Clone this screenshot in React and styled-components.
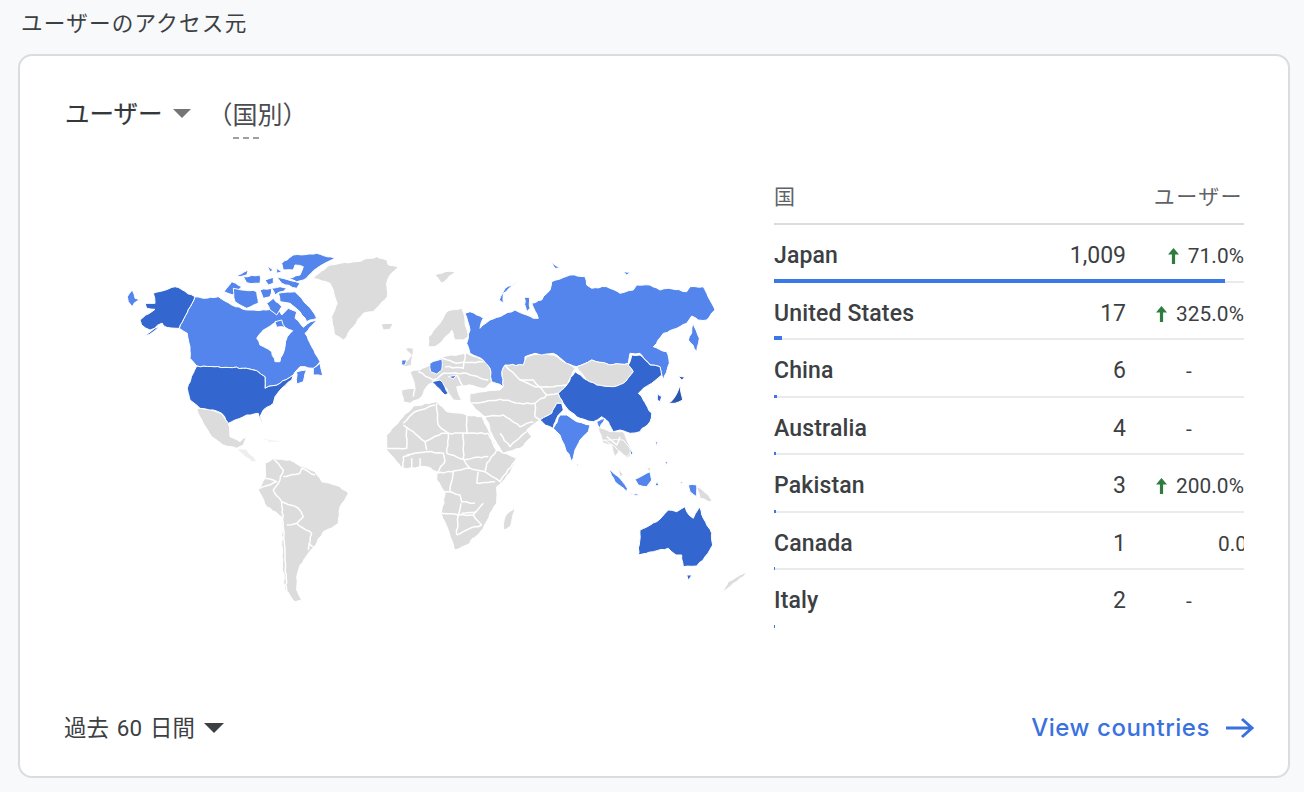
import React from "react";
import styled, { createGlobalStyle } from "styled-components";

const Global = createGlobalStyle`
  html, body { margin: 0; padding: 0; background: #f8f9fa; }
  body { font-family: Roboto, "Noto Sans CJK JP", sans-serif; color: #3c4043; }
`;

const Page = styled.div`
  width: 1304px;
  height: 792px;
  overflow: hidden;
  padding: 6px 14px 0 18px;
  box-sizing: border-box;
`;
const PageTitle = styled.h2`
  margin: 0 0 16px 3px;
  height: 32px;
  font: 400 21.6px/32px "Noto Sans CJK JP", sans-serif;
  letter-spacing: 1.2px;
  color: #3c4043;
`;
const Card = styled.section`
  box-sizing: border-box;
  width: 1272px;
  height: 724px;
  background: #fff;
  border: 2px solid #dadce0;
  border-radius: 14px;
  padding: 39px 33px 30px 44px;
  display: flex;
  flex-direction: column;
`;
const CardHeader = styled.div`
  display: flex;
  align-items: center;
  height: 36px;
  font: 400 24.5px/36px "Noto Sans CJK JP", sans-serif;
  color: #35383b;
`;
const MetricLabel = styled.span`
  margin-left: 1px;
  -webkit-text-stroke: 0.2px #35383b;
`;
const Caret = styled.span`
  display: inline-block;
  width: 0;
  height: 0;
  margin-left: ${(p) => p.$gap}px;
  border-left: ${(p) => p.$size}px solid transparent;
  border-right: ${(p) => p.$size}px solid transparent;
  border-top: ${(p) => p.$size}px solid ${(p) => p.$color};
`;
const Dimension = styled.span`
  position: relative;
  margin-left: 17px;
  font-size: 25px;
  color: #4a4d51;
  &::after {
    content: "";
    position: absolute;
    left: 25px;
    width: 26px;
    bottom: -8px;
    border-bottom: 2px dashed #9aa0a6;
  }
`;
const Body = styled.div`
  display: grid;
  grid-template-columns: 710px 470px;
  margin-top: 44px;
`;
const MapHolder = styled.div`
  padding: 65px 0 0 36px;
`;
const WorldMap = styled.svg`
  display: block;
  width: 660px;
  height: 380px;
  filter: blur(0.35px);
`;
const Table = styled.div`
  display: flex;
  flex-direction: column;
`;
const TableHead = styled.div`
  display: flex;
  justify-content: space-between;
  align-items: center;
  box-sizing: border-box;
  height: 50px;
  border-bottom: 2px solid #dadce0;
  padding: 0 1px 8px 0;
  font: 400 21px/30px "Noto Sans CJK JP", sans-serif;
  color: #5f6368;
`;
const HeadRight = styled.span`
  letter-spacing: 1.4px;
`;
const Row = styled.div`
  position: relative;
  box-sizing: border-box;
  height: 57.5px;
  display: flex;
  align-items: flex-start;
  padding-top: 14px;
  border-bottom: 2px solid ${(p) => (p.$last ? "transparent" : "#e8eaed")};
`;
const Name = styled.span`
  flex: 1;
  font: 500 23px/34px Roboto, sans-serif;
  letter-spacing: 0.15px;
  color: #3c4043;
`;
const Value = styled.span`
  font: 400 23px/34px Roboto, sans-serif;
  color: #3c4043;
  text-align: right;
`;
const Change = styled.span`
  box-sizing: border-box;
  width: 118px;
  overflow: hidden;
  white-space: nowrap;
  display: flex;
  align-items: center;
  justify-content: ${(p) => (p.$pad ? "flex-start" : "flex-end")};
  padding-left: ${(p) => p.$pad || 0}px;
  font: 400 20.8px/34px Roboto, sans-serif;
  color: #3c4043;
  letter-spacing: 0.1px;
`;
const UpArrow = styled.svg`
  width: 13px;
  height: 18px;
  margin-right: 8px;
  flex: none;
`;
const Bar = styled.div`
  position: absolute;
  left: 0;
  bottom: -2px;
  height: ${(p) => p.$h}px;
  background: #3b78e7;
`;
const Footer = styled.div`
  margin-top: auto;
  display: flex;
  align-items: center;
  justify-content: space-between;
  height: 36px;
`;
const Range = styled.span`
  display: flex;
  align-items: center;
  font: 400 22.4px/36px Roboto, "Noto Sans CJK JP", sans-serif;
  word-spacing: 2.5px;
  color: #3c4043;
`;
const LinkOut = styled.a`
  display: flex;
  align-items: center;
  font: 500 24px/36px Inter, sans-serif;
  letter-spacing: 0.55px;
  color: #3a71df;
`;
const LinkArrow = styled.svg`
  width: 30px;
  height: 24px;
  margin-left: 15px;
  flex: none;
`;

const LIGHT = "#5385ec";
const DARK = "#3367cf";
const NAVY = "#2b56ae";
const GREY = "#dcdcdc";
const Z1 = [100, 240], Z2 = [420, 240], Z3 = [240, 400], Z4 = [540, 440];

const noise = (x, y, k) => {
  const v = Math.sin(x * 12.9898 + y * 78.233 + k) * 43758.5453;
  return (v - Math.floor(v)) * 2 - 1;
};
const roughen = (pts, closed) => {
  const out = [];
  const n = pts.length;
  const last = closed ? n : n - 1;
  for (let i = 0; i < last; i++) {
    const [ax, ay] = pts[i];
    const [bx, by] = pts[(i + 1) % n];
    out.push([ax, ay]);
    const len = Math.hypot(bx - ax, by - ay);
    const steps = Math.floor(len / 3.5);
    for (let s = 1; s < steps; s++) {
      const x = Math.round((ax + ((bx - ax) * s) / steps) * 10) / 10;
      const y = Math.round((ay + ((by - ay) * s) / steps) * 10) / 10;
      out.push([x + noise(x, y, 1) * 0.7, y + noise(x, y, 2) * 0.7]);
    }
  }
  if (!closed) out.push(pts[n - 1]);
  return out;
};
const tr = (o, s, closed = true) => {
  const pts = s.trim().split(/\s+/).map((p) => {
    const [x, y] = p.split(",").map(Number);
    return [o[0] + x / 3, o[1] + y / 3];
  });
  return roughen(pts, closed).map(([x, y]) => `${x.toFixed(1)},${y.toFixed(1)}`).join(" ");
};

const lands = [
  // Greenland, Iceland
  [Z1, GREY, "640,115 690,75 720,70 770,65 830,50 860,60 865,75 895,80 870,105 860,130 862,170 820,215 790,220 760,260 730,300 705,285 695,230 712,190 700,150 690,130"],
  [Z1, GREY, "843,252 880,250 870,268 850,270"],
  // South America
  [Z3, GREY, "100,175 150,180 175,195 225,215 245,245 300,260 325,280 300,320 295,370 250,395 230,430 205,460 180,495 170,530 170,570 185,600 165,605 135,570 128,500 125,350 80,320 55,270 75,235 75,190"],
  // Mexico
  [Z1, GREY, "290,505 340,512 365,522 385,550 390,590 420,605 440,590 430,615 410,625 370,615 335,590 310,550"],
  // Central America and Caribbean (faint)
  [Z1, "#eeeeee", "410,625 440,628 470,665 455,665 430,645"],
  [Z1, "#f3f3f3", "480,595 530,600 550,605 510,608"],
  // Africa
  [Z3, GREY, "440,105 480,60 520,18 590,5 620,35 680,45 725,50 745,90 770,150 830,175 810,220 770,260 770,310 750,340 730,385 690,430 645,450 635,420 605,345 615,275 590,240 590,215 560,200 490,205 440,150"],
  [Z3, GREY, "825,320 810,380 790,390 795,350"],
  // Europe
  [Z2, GREY, "-55,450 -15,445 -20,420 -30,395 0,390 30,375 70,350 140,340 190,360 210,385 215,425 195,445 150,435 110,440 125,480 100,480 80,445 45,420 20,440 5,470 -30,490 -50,485"],
  [Z2, GREY, "-55,380 -25,375 -20,325 -45,325 -25,345"],
  // Scandinavia
  [Z2, GREY, "25,320 25,290 60,250 80,215 125,205 135,240 145,290 130,300 105,300 95,270 60,310 45,320"],
  [Z2, GREY, "45,105 75,95 105,95 65,130"],
  // Turkey + Middle East + Central Asia
  [Z2, GREY, "150,460 240,450 250,440 245,395 255,375 310,375 320,350 365,340 400,345 440,370 465,385 440,435 415,460 430,490 410,490 395,520 360,540 320,570 335,590 300,625 250,640 225,600 195,530 150,490"],
  // Indochina, Malaysia
  [Z2, GREY, "535,560 570,575 610,575 640,640 620,655 600,625 585,650 575,615 550,610"],
  [Z4, GREY, "190,0 250,0 275,30 260,50 225,20"],
  [Z4, GREY, "235,85 250,105 240,110"],
  [Z4, GREY, "320,85 332,82 330,95"],
  [Z4, GREY, "470,140 505,165 517,185 480,175"],
  [Z4, GREY, "630,390 610,410 580,430 550,455 565,425 600,405"],
  [Z2, GREY, "470,665 476,675 470,680"],
  // Canada
  [Z1, LIGHT, "285,170 310,175 355,170 395,195 440,210 500,210 530,205 545,225 565,205 590,215 585,235 610,262 632,245 652,240 615,280 635,320 660,365 640,385 600,380 580,405 540,430 495,445 495,410 470,392 440,385 290,378 270,355 270,320 262,280 238,265"],
  [Z1, "#ffffff", "530,245 490,270 470,295 480,315 515,335 525,365 540,365 555,320 562,290 578,272 555,262"],
  [Z1, LIGHT, "640,385 660,370 668,408 640,405"],
  [Z1, LIGHT, "590,395 620,390 610,425 590,432"],
  [Z1, LIGHT, "372,155 395,125 425,140 400,165"],
  [Z1, LIGHT, "400,145 470,155 475,190 440,205 405,185"],
  [Z1, LIGHT, "410,105 445,90 440,105 420,110"],
  [Z1, LIGHT, "430,110 480,105 480,130 440,128"],
  [Z1, LIGHT, "480,150 515,145 510,170 490,175"],
  [Z1, LIGHT, "495,120 520,112 520,130 505,135"],
  [Z1, LIGHT, "502,78 520,90 510,95"],
  [Z1, LIGHT, "515,145 540,140 560,145 525,165"],
  [Z1, LIGHT, "535,160 585,155 605,175 635,210 650,235 620,245 600,215 570,190 540,185"],
  [Z1, LIGHT, "530,110 600,130 590,145 545,130"],
  [Z1, LIGHT, "500,190 520,175 545,200 530,225 510,210"],
  [Z1, LIGHT, "545,70 580,45 650,40 705,55 650,85 610,120 590,125 565,115 600,105 610,80 585,75 580,90 550,90"],
  [Z1, LIGHT, "530,85 545,95 530,100"],
  [Z1, LIGHT, "525,245 545,240 555,262 530,262"],
  // USA
  [Z1, DARK, "290,378 440,385 470,392 495,410 495,445 540,430 580,405 575,420 545,445 525,470 520,490 490,510 480,530 487,555 475,520 440,525 405,540 385,550 365,520 340,510 300,505 270,480 262,445 280,400"],
  [Z1, DARK, "285,170 225,140 160,160 165,190 135,190 140,205 165,208 120,240 125,255 150,270 185,250 195,260 238,265"],
  [Z1, DARK, "188,250 160,275 125,295 155,272"],
  [Z1, LIGHT, "82,170 97,150 105,175 122,180 102,190 97,200 85,185"],
  // Russia
  [Z2, LIGHT, "140,310 145,295 150,270 135,220 150,215 190,235 180,265 210,240 285,210 320,225 340,235 355,235 335,190 365,180 390,150 395,125 450,105 495,110 500,135 515,145 560,140 600,160 640,150 650,135 690,135 720,150 745,145 800,155 810,140 850,140 875,190 885,210 860,240 835,240 815,228 800,250 770,265 730,280 700,320 740,335 748,370 730,420 720,380 690,375 660,340 630,340 625,370 570,375 515,360 470,380 440,370 400,340 365,345 345,340 315,350 310,375 255,375 245,395 250,440 215,425 210,385 190,360 150,340"],
  [Z2, LIGHT, "820,250 815,280 805,300 830,335 838,295"],
  [Z2, LIGHT, "295,125 255,145 238,180 250,190 250,160"],
  [Z2, LIGHT, "385,62 420,85 405,85"],
  [Z2, LIGHT, "610,95 640,97 620,105"],
  [Z2, LIGHT, "312,172 328,172 330,205 320,215"],
  // Mongolia
  [Z2, GREY, "470,380 515,360 570,375 625,370 640,395 610,430 580,440 530,435 500,420"],
  // China
  [Z2, DARK, "415,460 440,435 465,395 500,420 530,435 580,440 610,430 640,395 625,375 635,345 660,345 690,375 720,380 725,405 695,430 670,445 655,460 670,480 695,520 690,545 660,575 630,580 600,570 580,575 565,545 545,530 520,545 480,535 445,510 430,490"],
  // Pakistan, India
  [Z2, DARK, "360,540 395,520 410,490 425,490 430,510 415,525 400,565 375,555"],
  [Z2, LIGHT, "400,565 420,525 440,525 470,545 510,555 505,575 480,600 465,630 455,665 425,600 420,585"],
  [Z2, LIGHT, "530,545 555,535 540,565"],
  // Korea, Japan
  [Z2, DARK, "712,462 725,470 720,485 712,480"],
  [Z2, NAVY, "780,435 788,480 765,490 745,490 765,470 775,450"],
  [Z2, NAVY, "775,408 795,412 785,420"],
  // Europe blues
  [Z2, LIGHT, "30,370 65,357 65,390 50,402 32,395"],
  [Z2, LIGHT, "85,410 110,405 100,417"],
  [Z2, DARK, "35,425 60,420 85,460 75,465 50,440"],
  [Z1, LIGHT, "905,360 920,360 915,375 905,375"],
  // Indonesia, PNG, Philippines
  [Z4, LIGHT, "207,87 240,115 262,145 260,155 225,125"],
  [Z4, LIGHT, "285,118 330,95 335,120 320,140 295,135"],
  [Z4, LIGHT, "268,157 300,165 275,163"],
  [Z4, LIGHT, "350,125 358,137 345,137"],
  [Z4, LIGHT, "445,135 470,135 470,170 450,155"],
  [Z4, LIGHT, "420,124 432,128 422,130"],
  [Z4, LIGHT, "345,3 352,5 350,20"],
  [Z4, LIGHT, "375,65 383,65 378,77"],
  [Z4, LIGHT, "270,22 278,40 262,55 272,45"],
  // Australia
  [Z4, DARK, "295,345 300,270 350,245 385,210 410,215 435,200 440,215 460,235 478,200 490,235 515,280 518,315 495,350 470,378 430,380 425,345 408,345 385,325 340,335"],
  [Z4, DARK, "440,405 456,405 445,421"],
];

const borders = [
  [Z3, "490,70 525,35 585,15"],
  [Z3, "490,75 555,125 560,150"],
  [Z3, "500,85 500,145 440,145"],
  [Z3, "590,10 595,75 625,100"],
  [Z3, "680,45 680,100 625,100"],
  [Z3, "680,100 745,100"],
  [Z3, "555,125 605,100 625,100 620,160"],
  [Z3, "620,160 670,178 745,170"],
  [Z3, "670,100 670,175 690,205 735,215"],
  [Z3, "745,100 770,150 740,190 735,215"],
  [Z3, "500,165 560,155 610,160 615,185 590,220"],
  [Z3, "490,205 490,170 510,165"],
  [Z3, "515,175 515,205"],
  [Z3, "540,205 540,175"],
  [Z3, "590,220 635,215 690,205"],
  [Z3, "640,215 630,275 615,275"],
  [Z3, "630,275 660,285 665,305 705,310"],
  [Z3, "710,250 715,215"],
  [Z3, "710,250 765,245"],
  [Z3, "735,215 780,245 830,175"],
  [Z3, "605,340 655,345 650,405"],
  [Z3, "655,345 662,310"],
  [Z3, "655,345 700,345 725,375"],
  [Z3, "700,345 730,310"],
  [Z3, "665,340 710,335"],
  [Z3, "650,405 690,385 725,375"],
  [Z3, "690,425 700,415 708,425 698,432 690,425"],
  [Z3, "100,175 130,210 120,240 100,270 125,305"],
  [Z3, "75,235 110,245 60,265"],
  [Z3, "130,230 180,220 185,205 225,225"],
  [Z3, "125,305 175,325 190,350 170,370 140,375"],
  [Z3, "125,305 130,370 135,480 140,590"],
  [Z3, "170,370 215,400 205,450"],
  [Z3, "205,430 235,450"],
  [Z2, "150,490 195,485 240,478"],
  [Z2, "255,375 300,420 345,440 400,440 440,435"],
  [Z2, "300,420 340,420 380,465 415,460"],
  [Z2, "240,478 300,490 345,490 345,530 360,540"],
  [Z2, "345,490 380,465"],
  [Z2, "195,530 250,525 300,560 340,545"],
  [Z2, "240,580 270,620 320,575"],
  [Z2, "-5,395 40,420 70,400 95,400 140,400 205,420"],
  [Z2, "60,350 110,370 190,365"],
  [Z2, "110,405 130,440 150,435"],
  [Z2, "-15,445 -20,470"],
  [Z2, "75,380 130,385 135,340"],
  [Z2, "560,590 590,615 600,590"],
];

const rows = [
  { name: "Japan", value: "1,009", change: "71.0%", up: true, bar: 451, h: 4 },
  { name: "United States", value: "17", change: "325.0%", up: true, bar: 8, h: 4 },
  { name: "China", value: "6", change: "-", pad: 60, bar: 3, h: 3 },
  { name: "Australia", value: "4", change: "-", pad: 60, bar: 2, h: 3 },
  { name: "Pakistan", value: "3", change: "200.0%", up: true, bar: 2, h: 3 },
  { name: "Canada", value: "1", change: "0.0%", pad: 92, bar: 1, h: 3 },
  { name: "Italy", value: "2", change: "-", pad: 60, bar: 1, h: 3 },
];

export default function App() {
  return (
    <Page>
      <Global />
      <PageTitle>ユーザーのアクセス元</PageTitle>
      <Card>
        <CardHeader>
          <MetricLabel>ユーザー</MetricLabel>
          <Caret $gap={10} $size={9} $color="#757575" />
          <Dimension>（国別）</Dimension>
        </CardHeader>
        <Body>
          <MapHolder>
            <WorldMap viewBox="100 240 660 380" aria-label="world map">
              {lands.map(([o, fill, pts], i) => (
                <polygon key={i} points={tr(o, pts)} fill={fill} stroke="#fff" strokeWidth="1" strokeLinejoin="round" />
              ))}
              {borders.map(([o, pts], i) => (
                <polyline key={i} points={tr(o, pts, false)} fill="none" stroke="#fff" strokeWidth="1.5" strokeLinejoin="round" />
              ))}
            </WorldMap>
          </MapHolder>
          <Table>
            <TableHead>
              <span>国</span>
              <HeadRight>ユーザー</HeadRight>
            </TableHead>
            {rows.map((r, i) => (
              <Row key={r.name} $last={i === rows.length - 1}>
                <Name>{r.name}</Name>
                <Value>{r.value}</Value>
                <Change $pad={r.pad}>
                  {r.up && (
                    <UpArrow viewBox="0 0 13 18">
                      <path d="M6.5 1 L12 7.5 H8.1 V17 H4.9 V7.5 H1 Z" fill="#2e7d3e" />
                    </UpArrow>
                  )}
                  {r.change}
                </Change>
                <Bar $h={r.h} style={{ width: r.bar }} />
              </Row>
            ))}
          </Table>
        </Body>
        <Footer>
          <Range>
            過去 60 日間
            <Caret $gap={9} $size={10} $color="#3c4043" />
          </Range>
          <LinkOut>
            View countries
            <LinkArrow viewBox="0 0 30 24">
              <path d="M1 12 H27 M17 3 L27 12 L17 21" fill="none" stroke="#3a71df" strokeWidth="3" />
            </LinkArrow>
          </LinkOut>
        </Footer>
      </Card>
    </Page>
  );
}
